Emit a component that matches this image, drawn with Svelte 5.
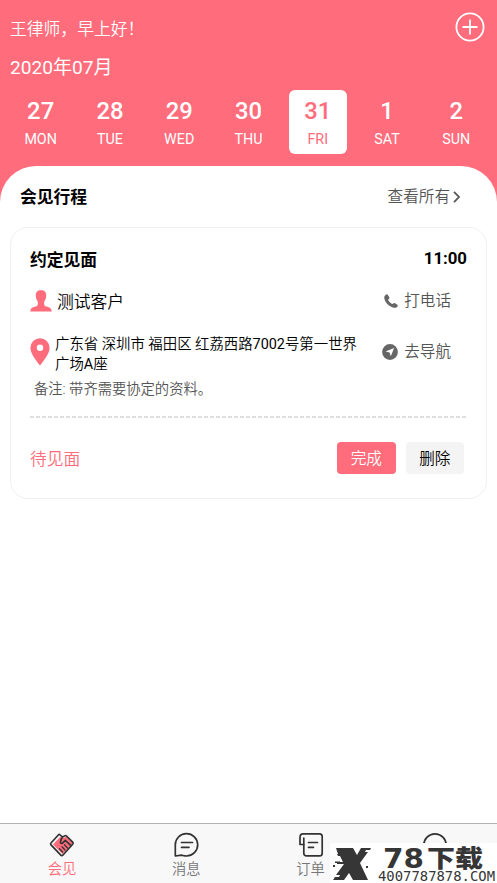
<script>
  const days = [
    { date: 27, label: 'MON' },
    { date: 28, label: 'TUE' },
    { date: 29, label: 'WED' },
    { date: 30, label: 'THU' },
    { date: 31, label: 'FRI' },
    { date: 1, label: 'SAT' },
    { date: 2, label: 'SUN' },
  ];

  const tabs = [
    { id: 'meet', label: '会见' },
    { id: 'message', label: '消息' },
    { id: 'order', label: '订单' },
    { id: 'mine', label: '' },
  ];

  let selected = $state(31);
  let activeTab = $state('meet');
</script>

<div class="page">
  <header>
    <div class="top">
      <span class="greeting">王律师，早上好！</span>
      <button class="add" aria-label="添加">
        <svg width="30" height="30" viewBox="0 0 30 30" fill="none" stroke="#fff" stroke-width="1.8">
          <circle cx="15" cy="15" r="13.6" />
          <path d="M15 7.5v15M7.5 15h15" />
        </svg>
      </button>
    </div>
    <div class="month">2020年07月</div>
    <div class="week">
      {#each days as day}
        <button class="day" class:selected={day.date === selected} onclick={() => (selected = day.date)}>
          <span class="date">{day.date}</span>
          <span class="label">{day.label}</span>
        </button>
      {/each}
    </div>
  </header>

  <main>
    <div class="section-head">
      <h2>会见行程</h2>
      <a class="more" href="#all">
        查看所有
        <svg width="10" height="14" viewBox="0 0 10 14" fill="none" stroke="#555" stroke-width="1.8">
          <path d="M2 1.8l5 5.2-5 5.2" />
        </svg>
      </a>
    </div>

    <section class="card">
      <div class="card-head">
        <h3>约定见面</h3>
        <span class="time">11:00</span>
      </div>

      <div class="row client">
        <svg class="person" width="22" height="22" viewBox="0 0 22 22" fill="#ff6c7b">
          <path d="M11 .3c3.6 0 5.4 2 5.2 5.2-.1 1.4-.1 2.7-.8 4-.6 1.2-1.3 2-1.3 3.4 0 2.3.5 3.2 2.5 3.7 3.2.7 4.9 1.9 5.2 5H.2c.3-3.1 2-4.300 5.200-5 2-.5 2.500-1.400 2.500-3.700 0-1.400-.7-2.200-1.300-3.400-.7-1.300-.7-2.600-.8-4C5.600 2.300 7.400.3 11 .3z" />
        </svg>
        <span class="name">测试客户</span>
        <a class="action" href="#call">
          <svg width="16" height="16" viewBox="0 0 16 16" fill="#666">
            <path d="M2.300 2.200C3.400 1.200 4.300 1 4.900 1.900l1.400 2.300c.4.800.1 1.300-.8 2.100-.5.500-.3 1 .2 1.700.8 1.200 1.900 2.200 3 2.800.6.300 1 .2 1.500-.3.700-.7 1.200-.8 1.900-.3l2.200 1.500c.8.600.7 1.300-.2 2.200-1.500 1.400-3.800 1.200-6.500-.4C4.500 11.700 2.200 9 1.500 6.300 1 4.500 1.200 3.200 2.300 2.200z" />
          </svg>
          打电话
        </a>
      </div>

      <div class="row place">
        <svg class="pin" width="20" height="28" viewBox="0 0 20 28" fill="#ff6c7b" fill-rule="evenodd">
          <path d="M10 .3a9.600 9.600 0 0 1 9.600 9.600c0 5-4.600 11-9.600 17.700C5 20.900.4 14.900.4 9.900A9.600 9.600 0 0 1 10 .3zm0 6.300a3.200 3.200 0 1 0 0 6.400 3.200 3.200 0 0 0 0-6.400z" />
        </svg>
        <span class="address">广东省 深圳市 福田区 红荔西路<span class="num">7002</span>号第一世界广场<span class="num">A</span>座</span>
        <a class="action" href="#navigate">
          <svg width="16" height="16" viewBox="0 0 16 16">
            <circle cx="8" cy="8" r="7.900" fill="#666" />
            <path d="M12.100 3.900L8.800 12.300 7.600 8.500 3.600 7.500z" fill="#fff" />
          </svg>
          去导航
        </a>
      </div>
      <p class="note">备注: 带齐需要协定的资料。</p>

      <div class="divider"></div>

      <div class="card-foot">
        <span class="status">待见面</span>
        <button class="btn primary">完成</button>
        <button class="btn">删除</button>
      </div>
    </section>
  </main>

  <nav>
    {#each tabs as tab}
      <button class="tab" class:active={tab.id === activeTab} onclick={() => (activeTab = tab.id)}>
        <svg width="26" height="26" viewBox="0 0 26 26" fill="none" stroke="#333" stroke-width="1.7" stroke-linecap="round" stroke-linejoin="round">
          {#if tab.id === 'meet'}
            <path d="M4 12.500L11 5l3 1 4-1.500 6 7L13.500 22z" fill="#ff6c7b" stroke="none" />
            <path d="M13.500 5.200L11.200 3c-.6-.6-1.300-.6-1.900 0L2 11c-.5.600-.5 1.300 0 1.900l9.800 10.200c.6.700 1.400.7 2 .1l9.900-11c.6-.7.6-1.400 0-2L17.500 4c-.5-.5-1-.6-1.600-.3-2.500 1-4 3-4.400 6.300-.2 1.600 1.500 2 2.700.6l2-2.300 5 4.500" />
            <path d="M10.500 16.800l3 3.200M13 14.800l3 3.200M15.500 12.800l3 3.200" stroke-width="1.300" />
          {:else if tab.id === 'message'}
            <path d="M2.300 24V13A11.200 11.200 0 1 1 13.500 24c-2 0-3.400-.5-5-.8z" />
            <path d="M8.500 10.500h11M8.500 15.300h7.500" />
          {:else if tab.id === 'order'}
            <path d="M5.800 12.500H2V5.500c0-2.600 1-3.600 3-3.600h16.500c1.700 0 2.700 1 2.700 2.700v16.600c0 1.700-1 2.700-2.700 2.700H8.500c-1.700 0-2.700-1-2.700-2.700z" />
            <path d="M5.800 12.500V6M10.500 10.500h9M10.500 15.300h5" />
          {:else}
            <circle cx="13" cy="13" r="11.200" />
          {/if}
        </svg>
        {#if tab.label}
          <span>{tab.label}</span>
        {/if}
      </button>
    {/each}
  </nav>

  <div class="watermark">
    <svg width="167" height="40" viewBox="0 0 167 40" fill="#363636">
      <path d="M6 5h17l4 7 4-7h10l-1 2h-4l-1 2h3l-8 11 8 17H23l-4-7-5 7H3l2-3h4l1-2H6l8-11H7v-2h6l-3-6H8l-1-2h1z" />
      <path d="M5 18.500h5v1.500H5zM3 22h2v2H3zM36 23h2v2h-2z" />
      <text class="big" x="53" y="25" textLength="41" lengthAdjust="spacingAndGlyphs">78</text>
      <text class="big-cjk" x="97" y="24" textLength="56" lengthAdjust="spacingAndGlyphs">下载</text>
      <text class="small" x="48" y="38" textLength="117" lengthAdjust="spacingAndGlyphs">4007787878.COM</text>
    </svg>
  </div>
</div>

<style>
  :global(body) {
    margin: 0;
  }

  .page {
    position: relative;
    display: flex;
    flex-direction: column;
    height: 883px;
    overflow: hidden;
    background: #ff6c7b;
    font-family: Roboto, 'Noto Sans CJK SC', sans-serif;
    font-size: 16.8px;
    font-weight: 350;
    color: #000;
  }

  button {
    padding: 0;
    border: 0;
    background: none;
    font: inherit;
    color: inherit;
  }

  a {
    color: inherit;
    text-decoration: none;
  }

  h2,
  h3,
  p {
    margin: 0;
  }

  h2,
  h3 {
    font-size: 16.8px;
    font-weight: 700;
    line-height: 26px;
  }

  svg {
    display: block;
    flex: none;
  }

  header {
    height: 166px;
    color: #fff;
  }

  .top {
    display: flex;
    align-items: center;
    justify-content: space-between;
    height: 32px;
    padding: 11px 12px 0 10px;
  }

  .greeting {
    padding-top: 3px;
    line-height: 24px;
  }

  .month {
    padding-left: 10px;
    padding-top: 11px;
    font-size: 19.1px;
    font-weight: 400;
    line-height: 28px;
  }

  .week {
    display: grid;
    grid-template-columns: repeat(7, 1fr);
    justify-items: center;
    margin-top: 8px;
    padding: 0 6px;
  }

  .day {
    display: flex;
    flex-direction: column;
    align-items: center;
    width: 58px;
    height: 64px;
    border-radius: 6px;
  }

  .day.selected {
    background: #fff;
    color: #ff6c7b;
  }

  .date {
    margin-top: 6px;
    font-size: 23.8px;
    font-weight: 500;
    line-height: 30px;
  }

  .label {
    margin-top: 3px;
    font-size: 14.3px;
    font-weight: 400;
    line-height: 20px;
  }

  main {
    flex: 1;
    padding: 19px 10px 0;
    border-radius: 36px 36px 0 0;
    background: #fff;
  }

  .section-head {
    display: flex;
    align-items: center;
    justify-content: space-between;
    height: 24px;
    padding: 0 25px 0 10px;
  }

  .more {
    display: flex;
    align-items: center;
    gap: 2px;
    height: 22px;
    font-size: 15.6px;
    line-height: 22px;
    color: #555;
  }

  .card {
    box-sizing: border-box;
    height: 272px;
    margin-top: 18px;
    padding: 19px 19px 0;
    border: 1px solid #f0f0f0;
    border-radius: 18px;
  }

  .card-head {
    display: flex;
    justify-content: space-between;
    height: 24px;
  }

  .time {
    font-weight: 700;
    line-height: 23px;
  }

  .row {
    display: flex;
    align-items: center;
  }

  .client {
    height: 24px;
    margin-top: 18px;
  }

  .name {
    margin-left: 5px;
  }

  .action {
    display: flex;
    align-items: center;
    gap: 5px;
    margin-left: auto;
    margin-right: 16px;
    font-size: 15.6px;
    line-height: 22px;
    color: #555;
  }

  .place {
    height: 40px;
    margin-top: 19px;
  }

  .address {
    width: 308px;
    margin-left: 5px;
    padding-top: 5px;
    font-size: 14.4px;
    line-height: 19.4px;
  }

  .num {
    font-weight: 400;
  }

  .place .action {
    gap: 6px;
    white-space: nowrap;
  }

  .note {
    margin: 7px 0 0 4px;
    font-size: 14.3px;
    line-height: 20px;
    color: #555;
  }

  .divider {
    height: 2px;
    margin-top: 17px;
    background: repeating-linear-gradient(90deg, #dfdfdf 0 4px, #fff 4px 6px);
  }

  .card-foot {
    display: flex;
    align-items: center;
    gap: 10px;
    height: 32px;
    margin-top: 24px;
    padding-right: 3px;
  }

  .status {
    flex: 1;
    color: #ff6c7b;
  }

  .btn {
    width: 58.5px;
    height: 32px;
    padding-bottom: 2px;
    border-radius: 4px;
    background: #f4f4f4;
    font-size: 15.6px;
  }

  .btn.primary {
    background: #ff6c7b;
    color: #fff;
  }

  nav {
    display: flex;
    height: 60px;
    box-sizing: border-box;
    border-top: 1px solid #b2b2b2;
    background: #f8f8f8;
  }

  .tab {
    flex: 1;
    display: flex;
    flex-direction: column;
    align-items: center;
    padding-top: 8px;
    font-size: 14.3px;
    line-height: 20px;
    color: #777;
  }

  .tab span {
    margin-top: 1px;
  }

  .tab.active {
    color: #ff6c7b;
  }

  .watermark {
    position: absolute;
    right: 0;
    bottom: 0;
    background: #fff;
  }

  .watermark svg {
    overflow: visible;
  }

  .big {
    font: 700 27px 'DejaVu Sans', sans-serif;
  }

  .big-cjk {
    font: 900 24px 'Noto Sans CJK SC', sans-serif;
  }

  .small {
    font: 400 14px 'DejaVu Sans Mono', monospace;
  }
</style>
